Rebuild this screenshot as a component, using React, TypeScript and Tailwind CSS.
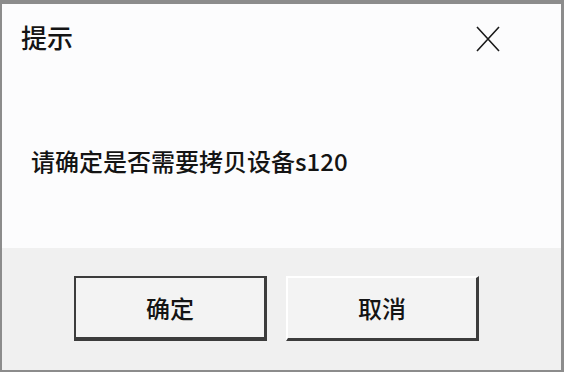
export default function App() {
  return (
    <div
      className="w-[564px] h-[372px] flex flex-col bg-[#f0f0f0] border-t-4 border-l-2 border-r-[3px] border-b-2 border-[#8c8c8c] text-[#141414]"
      style={{ fontFamily: '"Noto Sans CJK SC", "Noto Sans", sans-serif' }}
    >
      <div className="h-[244px] bg-[#fcfcfd] flex flex-col">
        <div className="flex justify-between items-start pt-[20px] pl-[19px] pr-[61px]">
          <span className="text-[26px] leading-none font-medium">提示</span>
          <svg width="24" height="26" viewBox="0 0 24 26" className="mt-[2px]">
            <path d="M1 1 L23 25 M23 1 L1 25" stroke="#1a1a1a" strokeWidth="1.6" fill="none" />
          </svg>
        </div>
        <div className="mt-[97px] pl-[29px] text-[24px] leading-none font-medium">请确定是否需要拷贝设备s120</div>
      </div>
      <div className="flex-1 flex gap-[19px] pt-[28px] pl-[72px]">
        <button className="w-[193px] h-[65px] bg-[#f3f3f3] border-t-2 border-l-2 border-r-[3px] border-b-[4px] border-[#3c3c3c] text-[24px] leading-none font-medium">
          确定
        </button>
        <button className="w-[193px] h-[65px] bg-[#f3f3f3] border-t-2 border-l-2 border-t-white border-l-white border-r-[3px] border-b-[3px] border-r-[#3c3c3c] border-b-[#3c3c3c] text-[24px] leading-none font-medium">
          取消
        </button>
      </div>
    </div>
  )
}
